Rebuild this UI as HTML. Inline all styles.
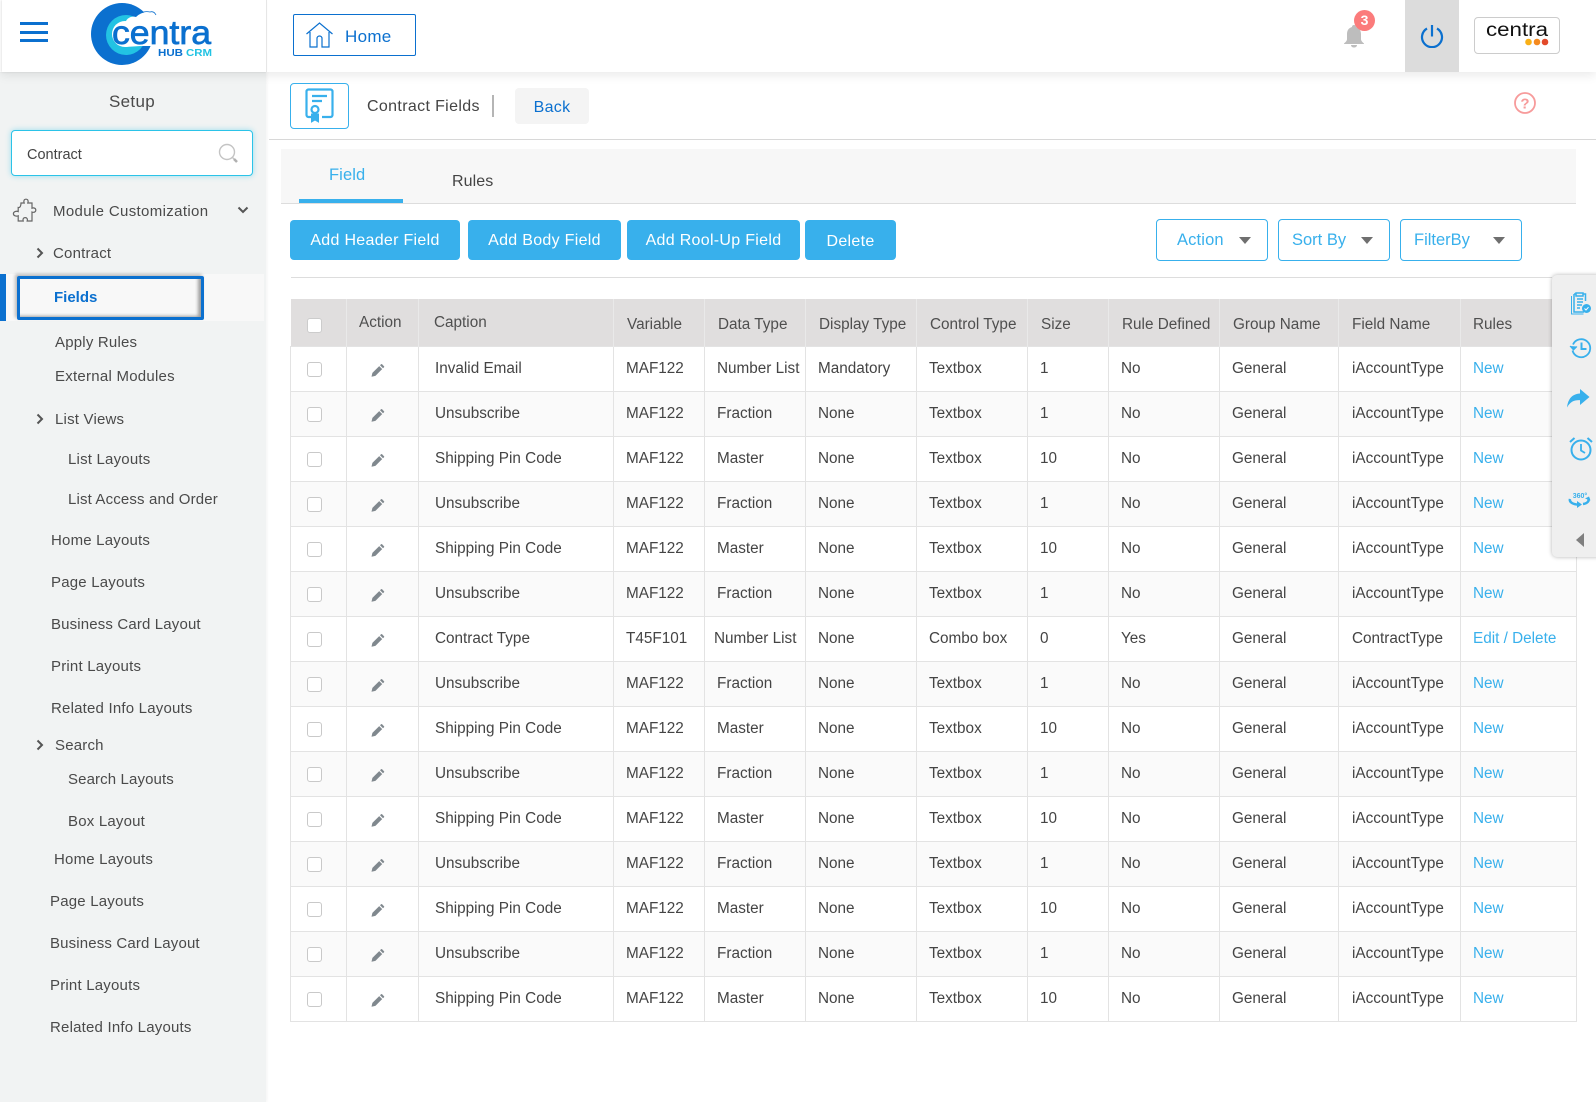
<!DOCTYPE html>
<html lang="en"><head><meta charset="utf-8"><title>Contract Fields</title>
<style>
*{box-sizing:border-box}
html,body{margin:0;padding:0;width:1596px;height:1102px;overflow:hidden;background:#fff;font-family:"Liberation Sans",sans-serif;color:#444}
.a{position:absolute;white-space:nowrap}
#side{position:absolute;left:0;top:72px;width:266px;height:1030px;background:#f1f3f3;box-shadow:1px 0 3px rgba(0,0,0,.05)}
#top{position:absolute;left:0;top:0;width:1596px;height:72px;background:#fff;box-shadow:0 3px 10px rgba(0,0,0,.09)}
#topl{position:absolute;left:2px;top:0;width:265px;height:72px;background:#fff;border-right:1px solid #e6e6e6;box-shadow:-1px 0 2px rgba(0,0,0,.1)}
.m{position:absolute;white-space:nowrap;font-size:15px;line-height:20px;color:#4a4a4a;letter-spacing:.2px;margin-top:1px}
.btn{position:absolute;top:220px;height:40px;background:#38b0ec;color:#fff;border-radius:4px;font-size:16px;line-height:42px;text-align:center;letter-spacing:.3px}
.sel{position:absolute;top:219px;height:42px;border:1px solid #38b0ec;border-radius:4px;color:#38b0ec;font-size:16.5px;line-height:41px;padding-left:20px;background:#fff}
.sel i{position:absolute;top:17px;width:0;height:0;border-left:6px solid transparent;border-right:6px solid transparent;border-top:7px solid #6f6f6f}
table{position:absolute;left:290px;top:299px;width:1286px;border-collapse:collapse;table-layout:fixed;font-size:15.3px;color:#444}
th{height:47px;background:#e0dede;font-weight:400;text-align:left;padding:6px 0 0 0;border-right:1px solid #e9e9e9;color:#4f4f4f;white-space:nowrap;overflow:visible}
td{height:45px;padding:0;border:1px solid #e3e3e3;white-space:nowrap;overflow:visible;background:#fff}
tr:nth-child(odd) td{background:#fafafa}
td:nth-child(3){padding-left:16px}td:nth-child(4){padding-left:12px}td:nth-child(5){padding-left:12px}td:nth-child(6){padding-left:12px}td:nth-child(7){padding-left:12px}td:nth-child(8){padding-left:12px}td:nth-child(9){padding-left:12px}td:nth-child(10){padding-left:12px}td:nth-child(11){padding-left:13px}td:nth-child(12){padding-left:12px}
th:nth-child(2){padding:2px 0 0 12px}th:nth-child(3){padding:2px 0 0 15px}th:nth-child(4){padding-left:13px}th:nth-child(5){padding-left:13px}th:nth-child(6){padding-left:13px}th:nth-child(7){padding-left:13px}th:nth-child(8){padding-left:13px}th:nth-child(9){padding-left:13px}th:nth-child(10){padding-left:13px}th:nth-child(11){padding-left:13px}th:nth-child(12){padding-left:12px}
td:last-child,td:last-child a{color:#38b0ec}
td:nth-child(1),td:nth-child(2){padding:0;position:relative}
.c{position:absolute;left:16px;top:15px;width:15px;height:15px;background:#fff;border:1px solid #c9c9c9;border-radius:3px}
th .c{left:16px;top:19px;border-color:#ccc}
th:first-child{position:relative}
.p{position:absolute;left:23px;top:16px;width:15px;height:15px}
</style></head><body>
<svg width="0" height="0" style="position:absolute"><symbol id="pen" viewBox="0 0 15 15"><path d="M1.500 13.800l.9-3.900 6.800-6.800 3 3-6.800 6.800z" fill="#80888e"/><path d="M10 2.300l1-1a.8.8 0 0 1 1.100 0l1.900 1.900a.8.8 0 0 1 0 1.100l-1 1z" fill="#80888e"/></symbol></svg>

<div id="side">
<div class="a" style="left:0;width:264px;top:20px;text-align:center;font-size:17px;line-height:20px;color:#4a4a4a;letter-spacing:.3px">Setup</div>
<div class="a" style="left:11px;top:58px;width:242px;height:46px;background:#fff;border:1px solid #2bc3e8;border-radius:4px;box-shadow:0 0 6px rgba(43,195,232,.45)"></div>
<div class="a" style="left:27px;top:73px;font-size:14.5px;line-height:20px;color:#444">Contract</div>
<svg class="a" style="left:218px;top:71px" width="22" height="22" viewBox="0 0 22 22"><circle cx="9" cy="9" r="7.500" fill="none" stroke="#c4c4c4" stroke-width="1.400"/><path d="M14.500 14.500l1.500 1.500" stroke="#c4c4c4" stroke-width="1.400"/><path d="M16 16l3 3" stroke="#b0b0b0" stroke-width="2.600"/></svg>
</div>

<!-- sidebar items (page coords) -->
<svg class="a" style="left:12px;top:198px" width="25" height="25" viewBox="0 0 25 25" fill="none" stroke="#666" stroke-width="1.200"><path d="M9 5h3.200c-.9-2.200 0-3.800 1.800-3.800s2.700 1.600 1.800 3.800H20v5.200c1.900-.8 3.800.1 3.800 1.900s-1.900 2.700-3.800 1.900V23h-4.800c.7-2-.3-3.400-2-3.400s-2.700 1.400-2 3.400H6.200v-5.200c-1.900.8-4.800-.1-4.800-2.100s2.900-2.900 4.800-2.100V9.500C8 10 9 8 9 5z"/></svg>
<div class="m" style="left:53px;top:201px;letter-spacing:.35px">Module Customization</div>
<svg class="a" style="left:237px;top:206px" width="12" height="8" viewBox="0 0 12 8"><path d="M1.500 1.500L6 6l4.500-4.500" fill="none" stroke="#555" stroke-width="2"/></svg>
<svg class="a" style="left:36px;top:247px" width="8" height="12" viewBox="0 0 8 12"><path d="M1.500 1.500L6 6l-4.500 4.500" fill="none" stroke="#555" stroke-width="2"/></svg>
<div class="m" style="left:53px;top:243px">Contract</div>
<div class="a" style="left:0;top:274px;width:264px;height:47px;background:#f8f8f8"></div>
<div class="a" style="left:0;top:274px;width:6px;height:47px;background:#0b70cf"></div>
<div class="a" style="left:17px;top:276px;width:187px;height:44px;border:3px solid #0b70cf;border-radius:2px;box-shadow:inset -5px -3px 3px -2px #9f9f9f,-2px -2px 3px rgba(0,0,0,.25)"></div>
<div class="m" style="left:54px;top:287px;color:#0b70cf;font-weight:700;letter-spacing:0">Fields</div>
<div class="m" style="left:55px;top:332px">Apply Rules</div>
<div class="m" style="left:55px;top:366px;letter-spacing:.25px">External Modules</div>
<svg class="a" style="left:36px;top:413px" width="8" height="12" viewBox="0 0 8 12"><path d="M1.500 1.500L6 6l-4.500 4.500" fill="none" stroke="#555" stroke-width="2"/></svg>
<div class="m" style="left:55px;top:409px">List Views</div>
<div class="m" style="left:68px;top:449px">List Layouts</div>
<div class="m" style="left:68px;top:489px;letter-spacing:.15px">List Access and Order</div>
<div class="m" style="left:51px;top:530px">Home Layouts</div>
<div class="m" style="left:51px;top:572px">Page Layouts</div>
<div class="m" style="left:51px;top:614px;letter-spacing:.15px">Business Card Layout</div>
<div class="m" style="left:51px;top:656px">Print Layouts</div>
<div class="m" style="left:51px;top:698px">Related Info Layouts</div>
<svg class="a" style="left:36px;top:739px" width="8" height="12" viewBox="0 0 8 12"><path d="M1.500 1.500L6 6l-4.500 4.500" fill="none" stroke="#555" stroke-width="2"/></svg>
<div class="m" style="left:55px;top:735px">Search</div>
<div class="m" style="left:68px;top:769px;letter-spacing:.12px">Search Layouts</div>
<div class="m" style="left:68px;top:811px">Box Layout</div>
<div class="m" style="left:54px;top:849px">Home Layouts</div>
<div class="m" style="left:50px;top:891px">Page Layouts</div>
<div class="m" style="left:50px;top:933px;letter-spacing:.15px">Business Card Layout</div>
<div class="m" style="left:50px;top:975px">Print Layouts</div>
<div class="m" style="left:50px;top:1017px">Related Info Layouts</div>

<!-- top bar -->
<div id="top">
<div id="topl"></div>
<div class="a" style="left:20px;top:22px;width:28px;height:3px;background:#0b70cf"></div>
<div class="a" style="left:20px;top:31px;width:28px;height:3px;background:#0b70cf"></div>
<div class="a" style="left:20px;top:39px;width:28px;height:3px;background:#0b70cf"></div>
<svg class="a" style="left:88px;top:0" width="128" height="70" viewBox="88 0 128 70">
<circle cx="122" cy="34" r="31" fill="#0b70cf"/>
<circle cx="126" cy="35" r="20" fill="#22c3e3"/>
<circle cx="125" cy="34" r="13" fill="#fff"/>
<path d="M126 21c2-4 7-5 10-4 4-4 10-6 14-4 3-1 6 1 7 3l15 4v26h-31l-16 1z" fill="#fff"/>
<path d="M132 16c1-1 3-1 4 0 4-4 10-5 14-4 3-1 5 1 6 3" fill="none" stroke="#0b70cf" stroke-width=".8"/>
<text x="112" y="44" font-family="Liberation Sans" font-size="33" fill="#0b70cf" stroke="#0b70cf" stroke-width=".7" textLength="99" lengthAdjust="spacingAndGlyphs">centra</text>
<text x="158" y="56" font-family="Liberation Sans" font-size="10.500" font-weight="700" fill="#0b70cf" textLength="25" lengthAdjust="spacingAndGlyphs">HUB</text>
<text x="186" y="56" font-family="Liberation Sans" font-size="10.500" font-weight="700" fill="#22c3e3" textLength="26" lengthAdjust="spacingAndGlyphs">CRM</text>
</svg>
<div class="a" style="left:293px;top:14px;width:123px;height:42px;border:1px solid #0b70cf;border-radius:2px"></div>
<svg class="a" style="left:305px;top:21px" width="30" height="27" viewBox="0 0 30 27" fill="none" stroke="#0b70cf" stroke-width="1.200"><path d="M1.500 13L14.500 2l13 11"/><path d="M5 11v15h7v-8.500a2.500 2.500 0 0 1 5 0V26h7V11"/></svg>
<div class="a" style="left:345px;top:27px;font-size:17px;line-height:20px;color:#0b70cf;letter-spacing:.3px">Home</div>
<svg class="a" style="left:1343px;top:24px" width="22" height="24" viewBox="0 0 22 24"><path d="M11 1c1.200 0 2 .8 2 2 3.500 1 5 3.800 5 7v5c0 2 1.500 3 3 4.500V20H1v-.5C2.500 18 4 17 4 15v-5c0-3.200 1.500-6 5-7 0-1.200.8-2 2-2z" fill="#bdbdbd"/><path d="M8 21h6c0 1.500-1.300 2.500-3 2.500S8 22.500 8 21z" fill="#bdbdbd"/></svg>
<div class="a" style="left:1354px;top:10px;width:21px;height:21px;border-radius:50%;background:#fb7b7b;color:#fff;font-size:14px;font-weight:700;line-height:21px;text-align:center">3</div>
<div class="a" style="left:1405px;top:0;width:54px;height:72px;background:#dcdcdc"></div>
<svg class="a" style="left:1420px;top:22px" width="24" height="26" viewBox="0 0 24 26" fill="none" stroke="#0b70cf" stroke-width="2.200"><path d="M7 6.500a10 10 0 1 0 10 0"/><path d="M12 3v11.500"/></svg>
<div class="a" style="left:1474px;top:17px;width:86px;height:37px;border:1px solid #ccc;border-radius:4px;background:#fff"></div>
<svg class="a" style="left:1484px;top:22px" width="68" height="26" viewBox="0 0 68 26"><text x="2" y="14" font-family="Liberation Sans" font-size="19" fill="#111" textLength="62" lengthAdjust="spacingAndGlyphs">centra</text><circle cx="44.500" cy="20" r="3.300" fill="#f9b017"/><circle cx="53" cy="20" r="3.300" fill="#f58a1f"/><circle cx="61" cy="20" r="3.300" fill="#e2492a"/></svg>
</div>

<!-- breadcrumb -->
<div class="a" style="left:290px;top:83px;width:59px;height:46px;border:1px solid #38b0ec;border-radius:4px;background:#fff"></div>
<svg class="a" style="left:305px;top:88px" width="30" height="36" viewBox="0 0 30 36" fill="none" stroke="#38b0ec" stroke-width="2.200"><path d="M8 29H3.500a2 2 0 0 1-2-2V3.500a2 2 0 0 1 2-2h22a2 2 0 0 1 2 2V27a2 2 0 0 1-2 2H17"/><path d="M7 8h15M7 13h10"/><circle cx="10" cy="21.500" r="3.500"/><path d="M6.500 26v8l3.500-2 3.500 2v-8z" fill="#38b0ec" stroke-width="1"/></svg>
<div class="a" style="left:367px;top:97px;font-size:16px;line-height:20px;color:#444;letter-spacing:.35px">Contract Fields</div>
<div class="a" style="left:492px;top:95px;width:2px;height:22px;background:#b5b5b5"></div>
<div class="a" style="left:515px;top:88px;width:74px;height:36px;background:#f4f4f4;border-radius:4px;color:#0b70cf;font-size:16px;line-height:40px;text-align:center;letter-spacing:.3px">Back</div>
<svg class="a" style="left:1513px;top:91px" width="24" height="24" viewBox="0 0 24 24"><circle cx="12" cy="12" r="10" fill="none" stroke="#f79b9b" stroke-width="1.800"/><text x="12" y="17.500" text-anchor="middle" font-family="Liberation Sans" font-weight="700" font-size="15" fill="#f79b9b">?</text></svg>
<div class="a" style="left:269px;top:139px;width:1327px;height:1px;background:#d8d8d8"></div>

<!-- tabs -->
<div class="a" style="left:281px;top:149px;width:1295px;height:55px;background:#f7f7f7;border-bottom:1px solid #ddd"></div>
<div class="a" style="left:299px;top:199px;width:104px;height:4px;background:#38b0ec"></div>
<div class="a" style="left:329px;top:165px;font-size:16.500px;line-height:20px;color:#38b0ec;letter-spacing:.1px">Field</div>
<div class="a" style="left:452px;top:172px;font-size:16px;line-height:20px;color:#444;letter-spacing:.1px">Rules</div>

<!-- buttons -->
<div class="btn" style="left:290px;width:170px">Add Header Field</div>
<div class="btn" style="left:468px;width:153px">Add Body Field</div>
<div class="btn" style="left:627px;width:173px">Add Rool-Up Field</div>
<div class="btn" style="left:805px;width:91px;line-height:44px">Delete</div>
<div class="sel" style="left:1156px;width:112px;letter-spacing:.15px">Action<i style="left:82px"></i></div>
<div class="sel" style="left:1278px;width:112px;padding-left:13px">Sort By<i style="left:82px"></i></div>
<div class="sel" style="left:1400px;width:122px;padding-left:13px">FilterBy<i style="left:92px"></i></div>
<div class="a" style="left:291px;top:277px;width:1261px;height:1px;background:#ddd"></div>

<!-- table -->
<table>
<colgroup><col style="width:56px"><col style="width:72px"><col style="width:195px"><col style="width:91px"><col style="width:101px"><col style="width:111px"><col style="width:111px"><col style="width:81px"><col style="width:111px"><col style="width:119px"><col style="width:122px"><col style="width:116px"></colgroup>
<tr><th><span class="c"></span></th><th>Action</th><th>Caption</th><th>Variable</th><th>Data Type</th><th>Display Type</th><th>Control Type</th><th>Size</th><th>Rule Defined</th><th>Group Name</th><th>Field Name</th><th>Rules</th></tr>
<tr><td><span class="c"></span></td><td><svg class="p"><use href="#pen"/></svg></td><td>Invalid Email</td><td>MAF122</td><td>Number List</td><td>Mandatory</td><td>Textbox</td><td>1</td><td>No</td><td>General</td><td>iAccountType</td><td>New</td></tr>
<tr><td><span class="c"></span></td><td><svg class="p"><use href="#pen"/></svg></td><td>Unsubscribe</td><td>MAF122</td><td>Fraction</td><td>None</td><td>Textbox</td><td>1</td><td>No</td><td>General</td><td>iAccountType</td><td>New</td></tr>
<tr><td><span class="c"></span></td><td><svg class="p"><use href="#pen"/></svg></td><td>Shipping Pin Code</td><td>MAF122</td><td>Master</td><td>None</td><td>Textbox</td><td>10</td><td>No</td><td>General</td><td>iAccountType</td><td>New</td></tr>
<tr><td><span class="c"></span></td><td><svg class="p"><use href="#pen"/></svg></td><td>Unsubscribe</td><td>MAF122</td><td>Fraction</td><td>None</td><td>Textbox</td><td>1</td><td>No</td><td>General</td><td>iAccountType</td><td>New</td></tr>
<tr><td><span class="c"></span></td><td><svg class="p"><use href="#pen"/></svg></td><td>Shipping Pin Code</td><td>MAF122</td><td>Master</td><td>None</td><td>Textbox</td><td>10</td><td>No</td><td>General</td><td>iAccountType</td><td>New</td></tr>
<tr><td><span class="c"></span></td><td><svg class="p"><use href="#pen"/></svg></td><td>Unsubscribe</td><td>MAF122</td><td>Fraction</td><td>None</td><td>Textbox</td><td>1</td><td>No</td><td>General</td><td>iAccountType</td><td>New</td></tr>
<tr><td><span class="c"></span></td><td><svg class="p"><use href="#pen"/></svg></td><td>Contract Type</td><td>T45F101</td><td style="padding-left:9px">Number List</td><td>None</td><td>Combo box</td><td>0</td><td>Yes</td><td>General</td><td>ContractType</td><td>Edit / Delete</td></tr>
<tr><td><span class="c"></span></td><td><svg class="p"><use href="#pen"/></svg></td><td>Unsubscribe</td><td>MAF122</td><td>Fraction</td><td>None</td><td>Textbox</td><td>1</td><td>No</td><td>General</td><td>iAccountType</td><td>New</td></tr>
<tr><td><span class="c"></span></td><td><svg class="p"><use href="#pen"/></svg></td><td>Shipping Pin Code</td><td>MAF122</td><td>Master</td><td>None</td><td>Textbox</td><td>10</td><td>No</td><td>General</td><td>iAccountType</td><td>New</td></tr>
<tr><td><span class="c"></span></td><td><svg class="p"><use href="#pen"/></svg></td><td>Unsubscribe</td><td>MAF122</td><td>Fraction</td><td>None</td><td>Textbox</td><td>1</td><td>No</td><td>General</td><td>iAccountType</td><td>New</td></tr>
<tr><td><span class="c"></span></td><td><svg class="p"><use href="#pen"/></svg></td><td>Shipping Pin Code</td><td>MAF122</td><td>Master</td><td>None</td><td>Textbox</td><td>10</td><td>No</td><td>General</td><td>iAccountType</td><td>New</td></tr>
<tr><td><span class="c"></span></td><td><svg class="p"><use href="#pen"/></svg></td><td>Unsubscribe</td><td>MAF122</td><td>Fraction</td><td>None</td><td>Textbox</td><td>1</td><td>No</td><td>General</td><td>iAccountType</td><td>New</td></tr>
<tr><td><span class="c"></span></td><td><svg class="p"><use href="#pen"/></svg></td><td>Shipping Pin Code</td><td>MAF122</td><td>Master</td><td>None</td><td>Textbox</td><td>10</td><td>No</td><td>General</td><td>iAccountType</td><td>New</td></tr>
<tr><td><span class="c"></span></td><td><svg class="p"><use href="#pen"/></svg></td><td>Unsubscribe</td><td>MAF122</td><td>Fraction</td><td>None</td><td>Textbox</td><td>1</td><td>No</td><td>General</td><td>iAccountType</td><td>New</td></tr>
<tr><td><span class="c"></span></td><td><svg class="p"><use href="#pen"/></svg></td><td>Shipping Pin Code</td><td>MAF122</td><td>Master</td><td>None</td><td>Textbox</td><td>10</td><td>No</td><td>General</td><td>iAccountType</td><td>New</td></tr>
</table>

<!-- right panel -->
<div class="a" style="left:1552px;top:275px;width:50px;height:282px;background:#efefef;border-radius:5px;box-shadow:0 0 4px rgba(0,0,0,.3)"></div>
<svg class="a" style="left:1570px;top:291px" width="22" height="24" viewBox="0 0 22 24" fill="none" stroke="#38b0ec" stroke-width="1.500"><path d="M4 3h2M13 3h2.500v7M4 3v18h10"/><path d="M1.500 5v18h12" stroke-width="1"/><path d="M6 2h7v3H6zM7 8h6M7 11h6M7 14h5M7 17h3"/><circle cx="16.500" cy="17.500" r="4.500" fill="#38b0ec" stroke="none"/><path d="M14.500 17.500l1.500 1.500 2.500-2.800" stroke="#fff" stroke-width="1"/></svg>
<svg class="a" style="left:1569px;top:337px" width="23" height="22" viewBox="0 0 23 22" fill="none" stroke="#38b0ec" stroke-width="1.800"><path d="M4 7.500a9 9 0 1 1-.5 6"/><path d="M1 9l3.500 4L8 9.500" fill="#38b0ec" stroke-width="1"/><path d="M12.500 5.500V12h5" stroke-width="2"/></svg>
<svg class="a" style="left:1566px;top:388px" width="24" height="20" viewBox="0 0 24 20"><path d="M14 1l9.500 8-9.500 8v-4.800C8 12 4 14 1 19.500 2 11 6 6 14 5.500z" fill="#38b0ec"/></svg>
<svg class="a" style="left:1569px;top:436px" width="24" height="25" viewBox="0 0 24 25" fill="none" stroke="#38b0ec" stroke-width="2"><circle cx="12" cy="14" r="9.500"/><path d="M12 8v6.500l4 2.500" stroke-width="1.800"/><path d="M1 6l4.500-4M23 6l-4.500-4"/></svg>
<svg class="a" style="left:1567px;top:491px" width="24" height="19" viewBox="0 0 24 19"><text x="13" y="7" text-anchor="middle" font-family="Liberation Sans" font-weight="700" font-size="7" fill="#38b0ec">360°</text><path d="M3 8c-1 3 3 5.500 8 5.500M21 7c2 3-1 5.500-5 6" fill="none" stroke="#38b0ec" stroke-width="2.500"/><path d="M10 10l5 3.500-5 3.500zM18 7.500l4-2 1.500 4z" fill="#38b0ec"/></svg>
<div class="a" style="left:1576px;top:533px;width:0;height:0;border-top:7px solid transparent;border-bottom:7px solid transparent;border-right:8px solid #7f7f7f"></div>
</body></html>
